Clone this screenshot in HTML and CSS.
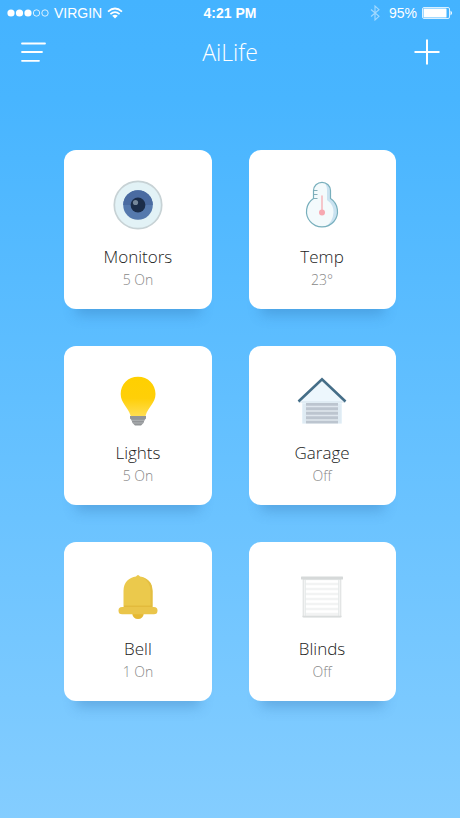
FILE: index.html
```html
<!DOCTYPE html>
<html lang="en">
<head>
<meta charset="utf-8">
<meta name="viewport" content="width=device-width, initial-scale=1">
<title>AiLife</title>
<link rel="stylesheet" href="styles.css">
</head>
<body>
<div class="status">
  <div class="status-left">
    <svg width="42" height="10" viewBox="0 0 42 10" aria-hidden="true">
      <g fill="#fff"><circle cx="4" cy="5" r="3.6"/><circle cx="12.5" cy="5" r="3.6"/><circle cx="21" cy="5" r="3.6"/></g>
      <g fill="none" stroke="#fff" stroke-width=".8"><circle cx="29.5" cy="5" r="3.2"/><circle cx="38" cy="5" r="3.2"/></g>
    </svg>
    <span>VIRGIN</span>
    <svg class="wifi" width="16" height="12" viewBox="0 0 16 12" aria-hidden="true">
      <path d="M1 4.6Q8-1.6 15 4.6M3.4 7.2Q8 3.2 12.6 7.2" fill="none" stroke="#fff" stroke-width="1.7"/>
      <path d="M5.2 8.7Q8 6.6 10.8 8.7L8 11.6Z" fill="#fff"/>
    </svg>
  </div>
  <time class="clock">4:21 PM</time>
  <div class="status-right">
    <svg class="bluetooth" width="10" height="16" viewBox="0 0 10 16" aria-hidden="true">
      <path d="M1 4.5L9 11.3L5 15V1L9 4.7L1 11.5" fill="none" stroke="#fff" stroke-width="1.1"/>
    </svg>
    <span>95%</span>
    <svg width="31" height="12" viewBox="0 0 31 12" aria-hidden="true">
      <rect x=".5" y=".5" width="27" height="11" rx="1.5" fill="none" stroke="#fff" stroke-width=".8"/>
      <rect x="1.5" y="1.5" width="23" height="9" rx=".5" fill="#fff"/>
      <path d="M28.5 3.500Q31.500 6 28.500 8.500Z" fill="#fff"/>
    </svg>
  </div>
</div>
<header class="bar">
  <button class="icon-button" aria-label="Menu">
    <svg width="26" height="26" viewBox="0 0 26 26"><path d="M2 4.5H25M2 13H22M2 21.8H19" fill="none" stroke="#fff" stroke-width="1.8" stroke-linecap="round"/></svg>
  </button>
  <h1>AiLife</h1>
  <button class="icon-button" aria-label="Add device">
    <svg width="26" height="26" viewBox="0 0 26 26"><path d="M.5 13H25.5M13 .5V25.5" fill="none" stroke="#fff" stroke-width="2"/></svg>
  </button>
</header>
<main class="devices">
  <button class="card">
    <svg width="80" height="70" viewBox="0 0 80 70" aria-hidden="true">
      <circle cx="40" cy="35" r="23.7" fill="#e2f2f6" stroke="#c7d2d5" stroke-width="1.700"/>
      <circle cx="40" cy="35" r="14.8" fill="#5579ad"/>
      <path d="M25.2 35A14.8 14.8 0 0 1 54.8 35Z" fill="#4a6ba1"/>
      <circle cx="40" cy="35" r="7.4" fill="#1b2d49"/>
      <circle cx="37.5" cy="32.5" r="2.6" fill="#75879a"/>
    </svg>
    <span class="name">Monitors</span>
    <span class="state">5 On</span>
  </button>
  <button class="card">
    <svg width="80" height="70" viewBox="0 0 80 70" aria-hidden="true">
      <path d="M31.5 28.5V20.5A8.5 8.2 0 0 1 48.5 20.5V28.5A15.5 15.5 0 1 1 31.5 28.5Z" fill="#f3fafc"/>
      <path d="M42 12.7Q45 15 45 20V30Q52 35 51.5 42.5Q51 52 43 57Q55 55 55.5 42.5Q55 33 48.500 28.5V20.5Q48 14 42 12.7Z" fill="#c9e2f0"/>
      <path d="M31.500 28.500V20.500A8.500 8.200 0 0 1 48.500 20.500V28.500A15.500 15.500 0 1 1 31.500 28.500Z" fill="none" stroke="#78afbc" stroke-width="1.200"/>
      <path d="M32 20.500H35.500M32 24.500H35.500M32 28.500H35.500" stroke="#86aeba" stroke-width="1.200"/>
      <path d="M40 26V42" stroke="#f6b4bb" stroke-width="1.500" stroke-linecap="round"/>
      <circle cx="40" cy="42.500" r="3" fill="#f7a8b1"/>
    </svg>
    <span class="name">Temp</span>
    <span class="state">23°</span>
  </button>
  <button class="card">
    <svg width="80" height="70" viewBox="0 0 80 70" aria-hidden="true">
      <defs><linearGradient id="glow" x1="0" y1="0" x2="0" y2="1"><stop offset="0" stop-color="#ffd000"/><stop offset=".55" stop-color="#ffcf08"/><stop offset="1" stop-color="#ffde52"/></linearGradient></defs>
      <path d="M40 10.700C30 10.700 22.700 18 22.700 28C22.700 37 30 41 32.700 50H47.500C50 41 57.500 37 57.500 28C57.500 18 50 10.700 40 10.700Z" fill="url(#glow)"/>
      <path d="M32 50H48V52.500L46.500 54L45.500 57L43 59.500H37L34.500 57L33.500 54L32 52.500Z" fill="#929598"/>
      <path d="M33.500 54.300H46.500M35 57H45" stroke="#b9bbbd" stroke-width=".8"/>
    </svg>
    <span class="name">Lights</span>
    <span class="state">5 On</span>
  </button>
  <button class="card">
    <svg width="80" height="70" viewBox="0 0 80 70" aria-hidden="true">
      <path d="M20 34L40 15L60 34V57.500H20Z" fill="#edf7fd"/>
      <path d="M20.500 37.500H24V57.500H20.500ZM56 37.500H59.500V57.500H56Z" fill="#dfebf3"/>
      <path d="M24 37H56V57.500H24Z" fill="#bcc5cf"/>
      <path d="M24 40.500H56M24 45H56M24 49.500H56M24 54H56" stroke="#dfe7ee" stroke-width="1.300"/>
      <path d="M16.500 36H63.500" stroke="#d3e1ea" stroke-width="1"/>
      <path d="M16.500 35.500L40 13.200L63.500 35.500" fill="none" stroke="#456e88" stroke-width="2.600"/>
    </svg>
    <span class="name">Garage</span>
    <span class="state">Off</span>
  </button>
  <button class="card">
    <svg width="80" height="70" viewBox="0 0 80 70" aria-hidden="true">
      <path d="M34 51H46Q45 57 40 57T34 51Z" fill="#e5b934"/>
      <path d="M25.500 46V29C25.500 20 31 15.500 38 14.500Q40 11.500 42 14.500C49 15.500 54.500 20 54.500 29V46Z" fill="#ebc94c"/>
      <path d="M44 15Q54.500 19 54.500 29V46H52.500V29Q52.500 20 44 15Z" fill="#e3be42"/>
      <path d="M26 43.500H54V46H26Z" fill="#e2ba3c"/>
      <rect x="20.500" y="45" width="39" height="7.300" rx="3.600" fill="#eac54a"/>
    </svg>
    <span class="name">Bell</span>
    <span class="state">1 On</span>
  </button>
  <button class="card">
    <svg width="80" height="70" viewBox="0 0 80 70" aria-hidden="true">
      <path d="M21.200 17H58.800V55H21.200Z" fill="#f2f3f3" stroke="#dcdfdf"/>
      <path d="M23.500 19.500H56.500M23.500 24.500H56.500M23.500 29.500H56.500M23.500 34.500H56.500M23.500 39.500H56.500M23.500 44.500H56.500M23.500 49.500H56.500" stroke="#fff" stroke-width="2.500"/>
      <path d="M23.500 18V54M56.500 18V54" stroke="#e3e6e6" stroke-width=".7"/>
      <path d="M20.500 54.500H59.500" stroke="#d9dcdc" stroke-width="1.600"/>
      <rect x="19" y="14.500" width="42" height="3" rx=".5" fill="#d6d9d9"/>
    </svg>
    <span class="name">Blinds</span>
    <span class="state">Off</span>
  </button>
</main>
</body>
</html>
```
FILE: styles.css
```css
* {
  box-sizing: border-box;
}

body {
  margin: 0;
  min-height: 100vh;
  background: linear-gradient(#44b3ff 0%, #48b5ff 12%, #84cdff 100%);
  font-family: "Open Sans", "Noto Sans", sans-serif;
  color: #fff;
}

svg {
  display: block;
}

button {
  border: 0;
  padding: 0;
  background: none;
  font: inherit;
  cursor: pointer;
}

.status {
  display: grid;
  grid-template-columns: 1fr auto 1fr;
  align-items: center;
  height: 26px;
  padding: 0 7px;
  font: 14px/16px "Liberation Sans", sans-serif;
}

.status-left,
.status-right {
  display: flex;
  align-items: center;
  gap: 5px;
}

.status-right {
  justify-content: flex-end;
}

.clock {
  font-weight: 700;
}

.bluetooth {
  margin-right: 4px;
  opacity: .5;
}

.bar {
  display: flex;
  align-items: center;
  justify-content: space-between;
  height: 52px;
  padding: 0 20px;
}

.icon-button {
  width: 26px;
  height: 26px;
}

.bar h1 {
  margin: 0;
  font-size: 23px;
  font-weight: 300;
  line-height: 32px;
}

.devices {
  display: grid;
  grid-template-columns: 1fr 1fr;
  gap: 37px;
  padding: 72px 14% 40px;
}

.card {
  display: flex;
  flex-direction: column;
  align-items: center;
  padding: 20px 0 19px;
  border-radius: 12px;
  background: #fff;
  box-shadow: 0 18px 12px -12px rgba(40, 100, 160, .3);
}

.name {
  margin-top: 4px;
  color: #222;
  font-size: 17px;
  font-weight: 300;
  line-height: 26px;
}

.state {
  color: #888;
  font-size: 14px;
  font-weight: 300;
  line-height: 20px;
}
```
